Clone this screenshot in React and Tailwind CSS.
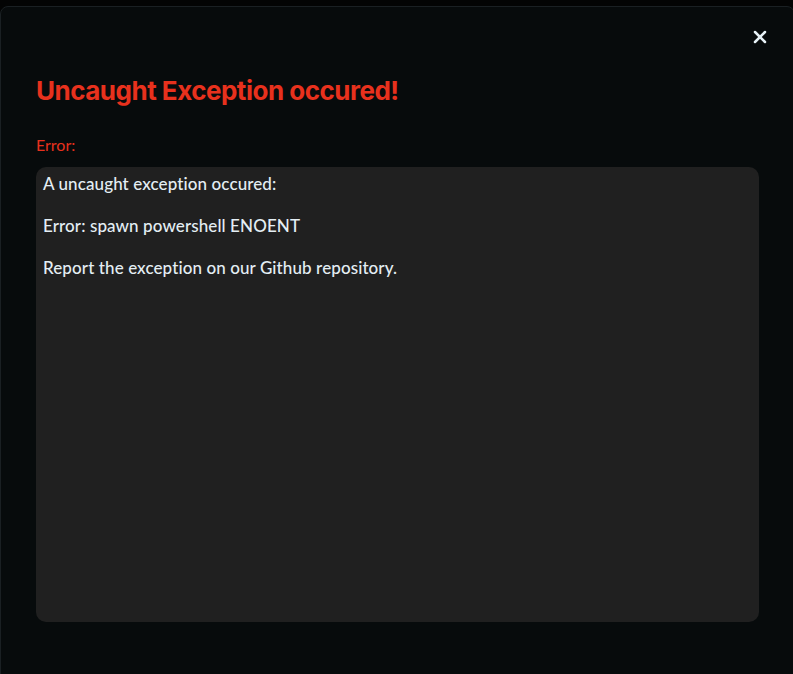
import { X } from 'lucide-react';

export default function App() {
  return (
    <div className="w-[793px] h-[674px] bg-[#030404] overflow-hidden relative">
      <div className="absolute left-0 top-[6px] w-[795px] h-[680px] bg-[#070b0c] border border-[#1a2023] rounded-[8px]">
        <button className="absolute right-[24px] top-[20px] text-[#e6f1f6]">
          <X size={20} strokeWidth={3} />
        </button>
        <div className="pl-[35px] pr-[35px] pt-[64px]">
          <h1 className="text-[#e8311d] text-[26px] font-bold leading-[40px] tracking-[-0.5px]" style={{ fontFamily: 'Inter, sans-serif' }}>
            Uncaught Exception occured!
          </h1>
          <div className="mt-[22px] text-[#e8311d] text-[16px] font-normal leading-[24px]" style={{ fontFamily: 'Lato, sans-serif' }}>
            Error:
          </div>
          <div className="mt-[10px] w-[723px] h-[455px] bg-[#202020] rounded-[10px] px-[7px] pt-[4px] text-[#e4eef4] text-[17px] font-medium tracking-[0.1px]" style={{ fontFamily: 'Lato, sans-serif' }}>
            <p className="leading-[26px] mb-[16px]">A uncaught exception occured:</p>
            <p className="leading-[26px] mb-[16px]">Error: spawn powershell ENOENT</p>
            <p className="leading-[26px]">Report the exception on our Github repository.</p>
          </div>
        </div>
      </div>
    </div>
  );
}
